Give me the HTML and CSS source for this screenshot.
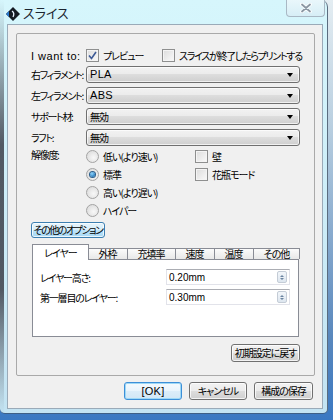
FILE: index.html
```html
<!DOCTYPE html>
<html lang="ja">
<head>
<meta charset="utf-8">
<title>スライス</title>
<link rel="stylesheet" href="styles.css">
</head>
<body>
<div class="window">
  <div class="titlebar">
    <svg class="appicon" width="14" height="14" viewBox="0 0 14 14">
      <polygon points="7,0 14,7 7,14 0,7" fill="#151a22"/>
      <polygon points="7,0 3,4 3,10 7,14 0,7" fill="#2a78cc"/>
      <path d="M6 4 Q9 6 7 10" stroke="#e8f2ff" stroke-width="1.3" fill="none"/>
    </svg>
    <span class="title">スライス</span>
    <div class="close">
      <svg width="12" height="10" viewBox="0 0 12 10">
        <path d="M2 1.5 L10 8.5 M10 1.5 L2 8.5" stroke="#ffffff" stroke-width="3.6" stroke-linecap="round"/>
        <path d="M2 1.5 L10 8.5 M10 1.5 L2 8.5" stroke="#8a97a3" stroke-width="1.8" stroke-linecap="round"/>
      </svg>
    </div>
  </div>
  <div class="client">
    <div class="group">
      <div class="want">
        <span class="lbl latin">I want to:</span>
        <label class="chk chk-preview"><span class="box"><svg width="9" height="9" viewBox="0 0 9 9"><path d="M1 4.5 L3.5 7.5 L8 1" stroke="#3d5a96" stroke-width="1.6" fill="none"/></svg></span>プレビュー</label>
        <label class="chk tight"><span class="box"></span>スライスが終了したらプリントする</label>
      </div>
      <div class="field"><span class="lbl">右フィラメント:</span><div class="combo"><span class="latin">PLA</span><span class="arrow"></span></div></div>
      <div class="field"><span class="lbl">左フィラメント:</span><div class="combo"><span class="latin">ABS</span><span class="arrow"></span></div></div>
      <div class="field"><span class="lbl">サポート材:</span><div class="combo">無効<span class="arrow"></span></div></div>
      <div class="field"><span class="lbl">ラフト:</span><div class="combo">無効<span class="arrow"></span></div></div>
      <div class="res">
        <span class="lbl res-lbl">解像度:</span>
        <div class="radios">
          <label class="opt"><span class="radio"></span>低い(より速い)</label>
          <label class="opt"><span class="radio on"></span>標準</label>
          <label class="opt"><span class="radio"></span>高い(より遅い)</label>
          <label class="opt"><span class="radio"></span>ハイパー</label>
        </div>
        <div class="checks">
          <label class="opt"><span class="box"></span>壁</label>
          <label class="opt"><span class="box"></span>花瓶モード</label>
        </div>
      </div>
      <button class="btn hot more">その他のオプション</button>
      <div class="tabs">
        <div class="tabstrip">
          <span class="tab sel">レイヤー</span>
          <span class="tab">外枠</span>
          <span class="tab">充填率</span>
          <span class="tab">速度</span>
          <span class="tab">温度</span>
          <span class="tab">その他</span>
        </div>
        <div class="panel">
          <div class="prow"><span class="plbl">レイヤー高さ:</span><div class="spin"><span class="latin">0.20mm</span><span class="spinbtn"><i class="up"></i><i class="down"></i></span></div></div>
          <div class="prow"><span class="plbl">第一層目のレイヤー:</span><div class="spin"><span class="latin">0.30mm</span><span class="spinbtn"><i class="up"></i><i class="down"></i></span></div></div>
        </div>
      </div>
      <div class="reset-row"><button class="btn reset">初期設定に戻す</button></div>
    </div>
    <div class="footer">
      <button class="btn def"><span class="latin">[OK]</span></button>
      <button class="btn">キャンセル</button>
      <button class="btn save">構成の保存</button>
    </div>
  </div>
</div>
</body>
</html>
```
FILE: styles.css
```css
* { box-sizing: border-box; }
html, body { margin: 0; padding: 0; }
body {
  width: 333px;
  height: 420px;
  overflow: hidden;
  background: linear-gradient(#e4edf2 0, #b9cfe0 30%, #5a88bd 80%, #3a78c2 100%);
  font-family: "Noto Sans CJK JP", "Noto Sans", sans-serif;
  font-size: 10px;
  letter-spacing: -1px;
  font-feature-settings: "palt";
  color: #000;
}
.latin {
  font-family: "Liberation Sans", "Noto Sans", sans-serif;
  font-size: 11px;
  letter-spacing: 0.3px;
}
.window {
  width: 328px;
  height: 414px;
  display: flex;
  flex-direction: column;
  border-right: 1px solid #5b6d80;
  border-bottom: 1px solid #3e5f86;
  border-radius: 0 7px 5px 5px;
  background:
    linear-gradient(to bottom, rgba(40,40,50,0) 0, rgba(40,40,50,0.75) 35%, rgba(40,40,50,0.75) 70%, rgba(40,40,50,0) 100%) left top / 4px 100% no-repeat,
    linear-gradient(to bottom, #d6f6fc 0, #cfeff9 40%, #c3e3f2 100%);
}
.titlebar {
  height: 24px;
  flex: none;
  display: flex;
  align-items: flex-start;
  padding-left: 6px;
}
.appicon { margin-top: 7px; flex: none; }
.title {
  margin-left: 3px;
  margin-top: 5px;
  font-size: 13px;
  letter-spacing: 0;
  line-height: 16px;
  color: #1c2530;
}
.close {
  margin-left: auto;
  margin-right: 2px;
  width: 39px;
  height: 17px;
  border: 1px solid #a9b8c4;
  border-top: none;
  border-radius: 0 0 4px 4px;
  background: linear-gradient(#e9f7fb, #d7eef6);
  display: flex;
  align-items: center;
  justify-content: center;
}
.client {
  flex: 1;
  margin: 0 4px 4px 7px;
  border: 1px solid #9aaab8;
  background: #f0f0f0;
  display: flex;
  flex-direction: column;
}
.group {
  margin: 8px 7px 0 8px;
  border: 1px solid #a9a9a9;
  border-radius: 2px;
  padding: 0 14px 13px 14px;
}
.lbl { width: 55px; flex: none; white-space: nowrap; letter-spacing: -1.3px; }
.want {
  display: flex;
  align-items: center;
  height: 13px;
  margin-top: 15px;
}
.want .latin { letter-spacing: 0.5px; }
.chk, .opt {
  display: flex;
  align-items: center;
  gap: 4px;
  white-space: nowrap;
}
.tight { letter-spacing: -1.3px; }
.chk-preview { width: 76px; flex: none; }
.box {
  width: 13px;
  height: 13px;
  flex: none;
  border: 1px solid #8e8f8f;
  background: linear-gradient(135deg, #dcdcdc, #fafafa);
  box-shadow: inset 0 0 0 1px #f4f4f4;
  display: flex;
  align-items: center;
  justify-content: center;
}
.field {
  display: flex;
  align-items: center;
  height: 17px;
  margin-top: 4px;
}
.combo {
  flex: 1;
  height: 17px;
  border: 1px solid #707070;
  border-radius: 3px;
  background: linear-gradient(#f2f2f2 0%, #ebebeb 50%, #dddddd 50%, #cfcfcf 100%);
  box-shadow: inset 0 0 0 1px rgba(255,255,255,0.7);
  display: flex;
  align-items: center;
  padding-left: 3px;
  line-height: 15px;
}
.arrow {
  margin-left: auto;
  margin-right: 6px;
  width: 0;
  height: 0;
  border-left: 3.5px solid transparent;
  border-right: 3.5px solid transparent;
  border-top: 4px solid #000;
}
.res {
  display: grid;
  grid-template-columns: 55px 109px auto;
  margin-top: 1px;
}
.res-lbl { line-height: 16px; }
.radios .opt, .checks .opt { height: 18px; }
.radio {
  width: 13px;
  height: 13px;
  flex: none;
  border-radius: 50%;
  border: 1px solid #a3a3a3;
  background: radial-gradient(circle at 60% 60%, #f8f8f8 0, #e0e0e0 70%);
  display: flex;
  align-items: center;
  justify-content: center;
}
.radio.on::after {
  content: "";
  width: 5px;
  height: 5px;
  border-radius: 50%;
  background: radial-gradient(circle at 40% 35%, #8fd6ff 0, #1b6fb3 80%);
  box-shadow: 0 0 0 1px #2a5d8a;
}
.btn {
  font: inherit;
  letter-spacing: inherit;
  font-feature-settings: "palt";
  color: #000;
  padding: 0 4px;
  margin: 0;
  border: 1px solid #707070;
  border-radius: 3px;
  background: linear-gradient(#f2f2f2 0%, #ebebeb 50%, #dddddd 50%, #cfcfcf 100%);
  box-shadow: inset 0 0 0 1px rgba(255,255,255,0.75);
  white-space: nowrap;
  line-height: 14px;
}
.more {
  display: block;
  margin-top: 3px;
  width: 74px;
  height: 16px;
  padding: 0;
  letter-spacing: -1.5px;
}
.hot {
  border-color: #3c7fb1;
  background: linear-gradient(#e5f4fc 0%, #d7eefb 50%, #bde4fa 50%, #a6d8f4 100%);
}
.tabs { margin: 6px 1px 0 1px; }
.tabstrip {
  display: flex;
  align-items: flex-end;
  height: 15px;
  position: relative;
  z-index: 1;
}
.tab {
  height: 11px;
  border: 1px solid #898c95;
  border-bottom: none;
  margin-left: -1px;
  padding: 0 10px;
  background: linear-gradient(#fbfbfb, #e8e8e8);
  line-height: 10px;
  white-space: nowrap;
}
.tab.sel {
  margin-left: 0;
  height: 16px;
  margin-bottom: -1px;
  background: #fff;
  padding: 0 11px;
  line-height: 15px;
  position: relative;
  z-index: 2;
}
.panel {
  height: 78px;
  border: 1px solid #898c95;
  background: #fff;
  padding: 9px 8px 0 7px;
}
.prow {
  display: flex;
  align-items: center;
  justify-content: space-between;
  height: 16px;
  margin-bottom: 4px;
}
.plbl { letter-spacing: -1.2px; }
.spin {
  width: 124px;
  height: 16px;
  border: 1px solid #e2e3ea;
  border-top-color: #abadb3;
  background: #fff;
  display: flex;
  align-items: center;
  padding-left: 2px;
}
.spin .latin { font-size: 10px; letter-spacing: 0; }
.spinbtn {
  margin-left: auto;
  margin-right: 2px;
  width: 10px;
  height: 12px;
  border: 1px solid #c4ccd6;
  border-radius: 2px;
  background: linear-gradient(#f2f6fa, #dde6ef);
  display: flex;
  flex-direction: column;
  align-items: center;
  justify-content: center;
  gap: 1px;
}
.spinbtn i {
  width: 0;
  height: 0;
  border-left: 2px solid transparent;
  border-right: 2px solid transparent;
}
.spinbtn .up { border-bottom: 2px solid #6b84a0; }
.spinbtn .down { border-top: 2px solid #6b84a0; }
.reset-row {
  display: flex;
  justify-content: flex-end;
  margin-top: 7px;
}
.reset { width: 69px; height: 18px; padding: 0; }
.footer {
  display: flex;
  justify-content: flex-end;
  gap: 7px;
  margin-top: 6px;
  padding-right: 9px;
}
.footer .btn { width: 58px; height: 18px; padding: 0; }
.footer .save { width: 59px; }
.def {
  border-color: #3c8fd8;
  background: linear-gradient(#f4fafe 0%, #e9f4fc 50%, #dcedf9 50%, #d2e7f6 100%);
  box-shadow: inset 0 0 0 1px #9ed8f6;
}
```
